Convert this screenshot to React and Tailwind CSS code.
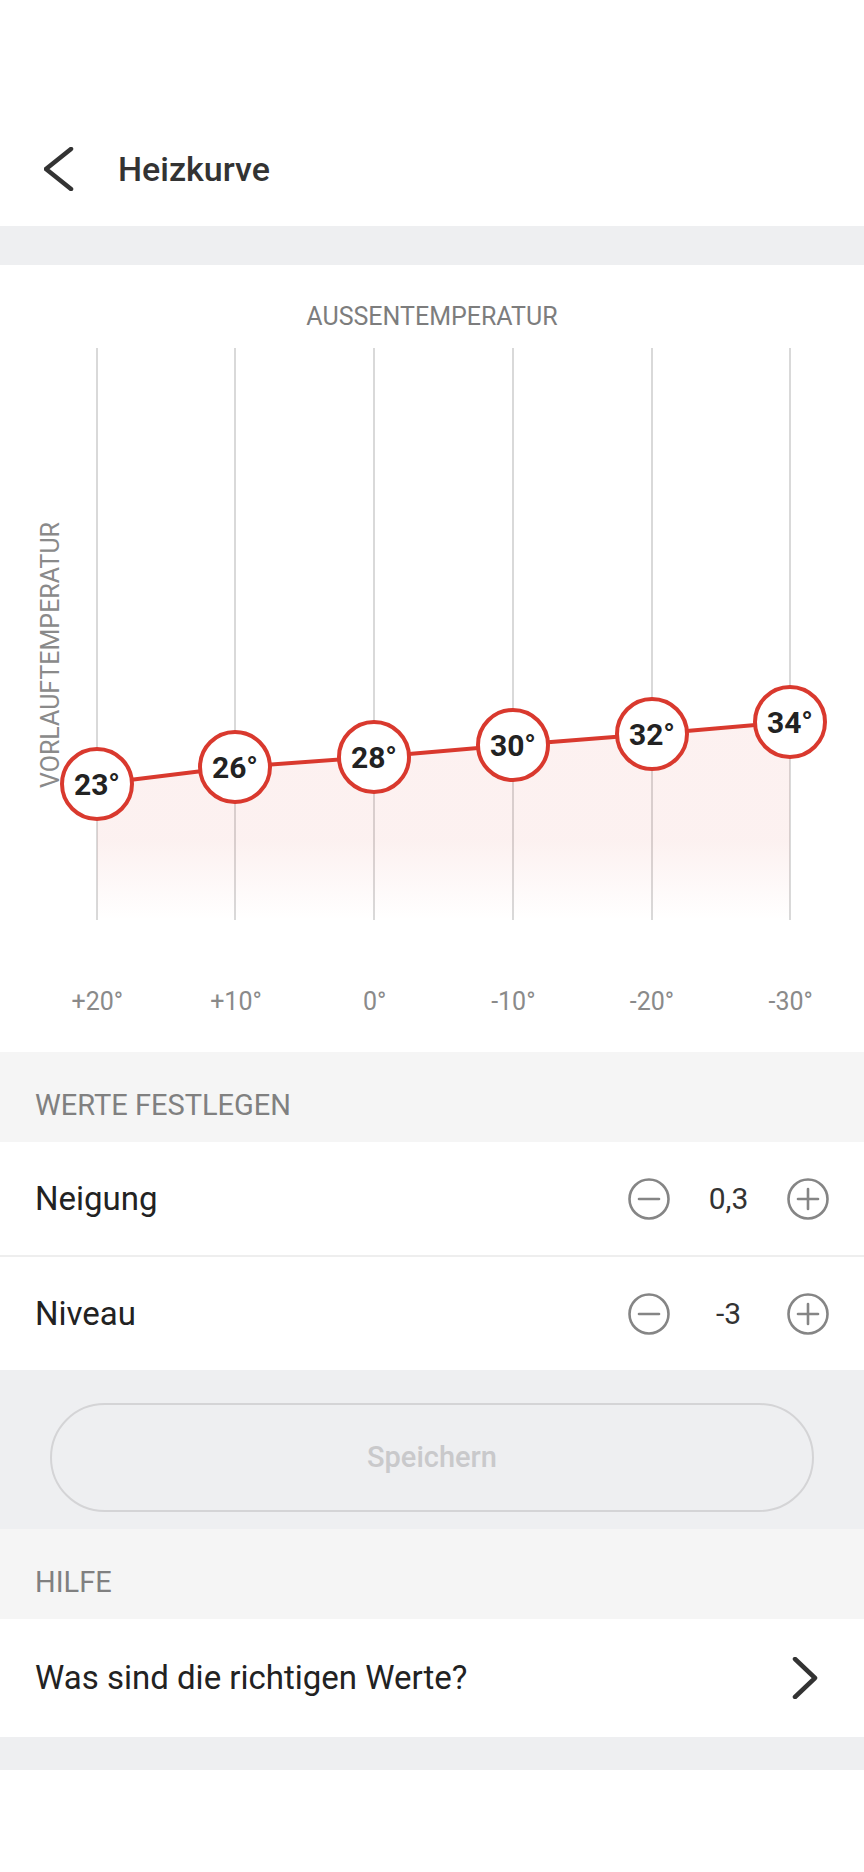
import React from "react";

const points = [
  { label: "+20°", value: "23°", x: 97, y: 436 },
  { label: "+10°", value: "26°", x: 235, y: 419 },
  { label: "0°", value: "28°", x: 374, y: 409 },
  { label: "-10°", value: "30°", x: 513, y: 397 },
  { label: "-20°", value: "32°", x: 652, y: 386 },
  { label: "-30°", value: "34°", x: 790, y: 374 },
];

const PLOT_H = 572;

const StepIcon = ({ plus }) => (
  <svg width="42" height="42" viewBox="0 0 42 42" fill="none">
    <circle cx="21" cy="21" r="19.5" stroke="#858585" strokeWidth="2.6" />
    <line x1="11" y1="21" x2="31" y2="21" stroke="#858585" strokeWidth="2.6" strokeLinecap="round" />
    {plus && (
      <line x1="21" y1="11" x2="21" y2="31" stroke="#858585" strokeWidth="2.6" strokeLinecap="round" />
    )}
  </svg>
);

const Stepper = ({ label, value, border }) => (
  <div
    className={
      "flex items-center pl-[35px] pr-[35px] bg-white " +
      (border ? "h-[115px] border-b-2 border-[#eeeeee]" : "h-[113px]")
    }
  >
    <span className="flex-1 text-[33px] text-[#222222]">{label}</span>
    <button className="flex items-center justify-center">
      <StepIcon />
    </button>
    <span className="w-[117px] text-center text-[30px] text-[#333333]">{value}</span>
    <button className="flex items-center justify-center">
      <StepIcon plus />
    </button>
  </div>
);

const Chart = () => {
  const line = points.map((p) => `${p.x},${p.y}`).join(" ");
  const area = `${points[0].x},${PLOT_H} ${line} ${points[points.length - 1].x},${PLOT_H}`;

  return (
    <div className="bg-white pt-[37px] pb-[35px]">
      <div className="text-center text-[25px] leading-[30px] text-[#7d7d7d]">
        AUSSENTEMPERATUR
      </div>

      {/* plot */}
      <div className="relative mt-[16px] h-[572px] w-full">
        <svg
          className="absolute inset-0"
          width="864"
          height={PLOT_H}
          viewBox={`0 0 864 ${PLOT_H}`}
        >
          <defs>
            <linearGradient id="fill" x1="0" y1="0" x2="0" y2="1">
              <stop offset="0.6" stopColor="#d9392e" stopOpacity="0.07" />
              <stop offset="1" stopColor="#d9392e" stopOpacity="0" />
            </linearGradient>
          </defs>
          {points.map((p) => (
            <line
              key={p.x}
              x1={p.x}
              y1="0"
              x2={p.x}
              y2={PLOT_H}
              stroke="#d9d9d9"
              strokeWidth="2"
            />
          ))}
          <polygon points={area} fill="url(#fill)" />
          <polyline points={line} fill="none" stroke="#d9392e" strokeWidth="4" />
        </svg>

        <div className="absolute left-[-88px] top-[292px] w-[278px] -rotate-90 text-center text-[25px] leading-[30px] text-[#8a8a8a]">
          VORLAUFTEMPERATUR
        </div>

        {points.map((p) => (
          <div
            key={p.value}
            className="absolute flex h-[74px] w-[74px] items-center justify-center rounded-full border-4 border-[#d9392e] bg-white"
            style={{ left: p.x - 37, top: p.y - 37 }}
          >
            <span className="text-[30px] font-bold text-[#222222]">{p.value}</span>
          </div>
        ))}
      </div>

      {/* x axis */}
      <div className="mt-[67px] ml-[28px] grid w-[832px] grid-cols-6">
        {points.map((p) => (
          <span key={p.label} className="text-center text-[25px] leading-[30px] text-[#8a8a8a]">
            {p.label}
          </span>
        ))}
      </div>
    </div>
  );
};

export default function App() {
  return (
    <div className="min-h-[1872px] w-[864px] bg-white font-['Roboto',sans-serif]">
      {/* header */}
      <div className="h-[226px] pt-[141px]">
        <div className="flex h-[56px] items-center">
          <svg className="ml-[44px]" width="30" height="44" viewBox="0 0 30 44" fill="none">
            <polyline
              points="27,2 2,22 27,42"
              stroke="#333333"
              strokeWidth="4.5"
              strokeLinecap="round"
              strokeLinejoin="round"
            />
          </svg>
          <h1 className="ml-[44px] text-[34px] font-medium text-[#333333]">Heizkurve</h1>
        </div>
      </div>

      <div className="h-[39px] bg-[#eeeff1]" />

      <Chart />

      {/* values */}
      <div className="h-[90px] bg-[#f5f5f5] pl-[35px] pt-[36px]">
        <span className="text-[29px] leading-[34px] text-[#808080]">WERTE FESTLEGEN</span>
      </div>
      <Stepper label="Neigung" value="0,3" border />
      <Stepper label="Niveau" value="-3" />

      <div className="bg-[#eeeff1] px-[50px] pt-[33px] pb-[17px]">
        <button className="flex h-[109px] w-full items-center justify-center rounded-full border-2 border-[#d4d4d6] text-[29px] font-medium text-[#c9c9cb]">
          Speichern
        </button>
      </div>

      {/* help */}
      <div className="h-[90px] bg-[#f5f5f5] pl-[35px] pt-[36px]">
        <span className="text-[29px] leading-[34px] text-[#808080]">HILFE</span>
      </div>
      <div className="flex h-[118px] items-center bg-white pl-[35px] pr-[46px]">
        <span className="flex-1 text-[33px] text-[#222222]">Was sind die richtigen Werte?</span>
        <svg width="26" height="42" viewBox="0 0 26 42" fill="none">
          <polyline
            points="3,2 23,21 3,40"
            stroke="#333333"
            strokeWidth="4.5"
            strokeLinecap="round"
            strokeLinejoin="round"
          />
        </svg>
      </div>
      <div className="h-[33px] bg-[#eeeff1]" />
    </div>
  );
}
